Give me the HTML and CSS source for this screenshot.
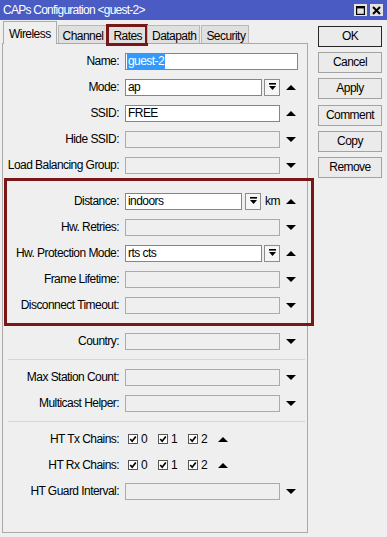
FILE: index.html
```html
<!DOCTYPE html>
<html>
<head>
<meta charset="utf-8">
<title>CAPs Configuration</title>
<link rel="stylesheet" href="styles.css">
</head>
<body>
<div class="titlebar">
  <span class="title">CAPs Configuration &lt;guest-2&gt;</span>
  <div class="wbtns">
    <span class="wbtn"><svg width="9" height="9" viewBox="0 0 9 9"><rect x="0.6" y="0.6" width="7.8" height="7.8" fill="none" stroke="#000" stroke-width="1.2"/><rect x="0" y="0" width="9" height="2.4" fill="#000"/></svg></span>
    <span class="wbtn"><svg width="9" height="9" viewBox="0 0 9 9"><path d="M1 1 L8 8 M8 1 L1 8" stroke="#000" stroke-width="2"/></svg></span>
  </div>
</div>
<div class="main">
  <div class="left">
    <div class="tabs">
      <div class="tab active">Wireless</div>
      <div class="tab">Channel</div>
      <div class="tab mark">Rates</div>
      <div class="tab">Datapath</div>
      <div class="tab">Security</div>
    </div>
    <div class="panel">
      <div class="group">
        <div class="row"><span class="lbl">Name:</span><div class="field"><div class="input"><span class="sel">guest-2</span></div></div></div>
        <div class="row"><span class="lbl">Mode:</span><div class="field"><div class="input">ap</div><div class="dd"><svg width="7" height="8" viewBox="0 0 7 8"><rect x="0" y="0" width="7" height="1.6" fill="#000"/><polygon points="0,3 7,3 3.5,7" fill="#000"/></svg></div><div class="slot"><svg class="arr" width="10" height="5" viewBox="0 0 10 5"><polygon points="0,5 5,0 10,5" fill="#000"/></svg></div></div></div>
        <div class="row"><span class="lbl">SSID:</span><div class="field"><div class="input">FREE</div><div class="slot"><svg class="arr" width="10" height="5" viewBox="0 0 10 5"><polygon points="0,5 5,0 10,5" fill="#000"/></svg></div></div></div>
        <div class="row"><span class="lbl">Hide SSID:</span><div class="field"><div class="input off"></div><div class="slot"><svg class="arr" width="10" height="5" viewBox="0 0 10 5"><polygon points="0,0 10,0 5,5" fill="#000"/></svg></div></div></div>
        <div class="row"><span class="lbl">Load Balancing Group:</span><div class="field"><div class="input off"></div><div class="slot"><svg class="arr" width="10" height="5" viewBox="0 0 10 5"><polygon points="0,0 10,0 5,5" fill="#000"/></svg></div></div></div>
      </div>
      <div class="gap"></div>
      <div class="group hl">
        <div class="row"><span class="lbl">Distance:</span><div class="field"><div class="input">indoors</div><div class="dd dd-wide"><svg width="7" height="8" viewBox="0 0 7 8"><rect x="0" y="0" width="7" height="1.6" fill="#000"/><polygon points="0,3 7,3 3.5,7" fill="#000"/></svg></div><span class="unit">km</span><div class="slot"><svg class="arr" width="10" height="5" viewBox="0 0 10 5"><polygon points="0,5 5,0 10,5" fill="#000"/></svg></div></div></div>
        <div class="row"><span class="lbl">Hw. Retries:</span><div class="field"><div class="input off"></div><div class="slot"><svg class="arr" width="10" height="5" viewBox="0 0 10 5"><polygon points="0,0 10,0 5,5" fill="#000"/></svg></div></div></div>
        <div class="row"><span class="lbl">Hw. Protection Mode:</span><div class="field"><div class="input">rts cts</div><div class="dd"><svg width="7" height="8" viewBox="0 0 7 8"><rect x="0" y="0" width="7" height="1.6" fill="#000"/><polygon points="0,3 7,3 3.5,7" fill="#000"/></svg></div><div class="slot"><svg class="arr" width="10" height="5" viewBox="0 0 10 5"><polygon points="0,5 5,0 10,5" fill="#000"/></svg></div></div></div>
        <div class="row"><span class="lbl">Frame Lifetime:</span><div class="field"><div class="input off"></div><div class="slot"><svg class="arr" width="10" height="5" viewBox="0 0 10 5"><polygon points="0,0 10,0 5,5" fill="#000"/></svg></div></div></div>
        <div class="row"><span class="lbl">Disconnect Timeout:</span><div class="field"><div class="input off"></div><div class="slot"><svg class="arr" width="10" height="5" viewBox="0 0 10 5"><polygon points="0,0 10,0 5,5" fill="#000"/></svg></div></div></div>
      </div>
      <div class="gap"></div>
      <div class="group">
        <div class="row"><span class="lbl">Country:</span><div class="field"><div class="input off"></div><div class="slot"><svg class="arr" width="10" height="5" viewBox="0 0 10 5"><polygon points="0,0 10,0 5,5" fill="#000"/></svg></div></div></div>
      </div>
      <div class="sep"></div>
      <div class="group">
        <div class="row"><span class="lbl">Max Station Count:</span><div class="field"><div class="input off"></div><div class="slot"><svg class="arr" width="10" height="5" viewBox="0 0 10 5"><polygon points="0,0 10,0 5,5" fill="#000"/></svg></div></div></div>
        <div class="row"><span class="lbl">Multicast Helper:</span><div class="field"><div class="input off"></div><div class="slot"><svg class="arr" width="10" height="5" viewBox="0 0 10 5"><polygon points="0,0 10,0 5,5" fill="#000"/></svg></div></div></div>
      </div>
      <div class="sep"></div>
      <div class="group">
        <div class="row"><span class="lbl">HT Tx Chains:</span><div class="field checks">
          <span class="chk"><svg width="10" height="10" viewBox="0 0 10 10"><rect x="0.5" y="0.5" width="9" height="9" fill="#fff" stroke="#555"/><path d="M2.2 5 L4.2 7.2 L7.8 2.6" fill="none" stroke="#000" stroke-width="1.7"/></svg>0</span>
          <span class="chk"><svg width="10" height="10" viewBox="0 0 10 10"><rect x="0.5" y="0.5" width="9" height="9" fill="#fff" stroke="#555"/><path d="M2.2 5 L4.2 7.2 L7.8 2.6" fill="none" stroke="#000" stroke-width="1.7"/></svg>1</span>
          <span class="chk"><svg width="10" height="10" viewBox="0 0 10 10"><rect x="0.5" y="0.5" width="9" height="9" fill="#fff" stroke="#555"/><path d="M2.2 5 L4.2 7.2 L7.8 2.6" fill="none" stroke="#000" stroke-width="1.7"/></svg>2</span>
          <svg class="arr" width="10" height="5" viewBox="0 0 10 5"><polygon points="0,5 5,0 10,5" fill="#000"/></svg>
        </div></div>
        <div class="row"><span class="lbl">HT Rx Chains:</span><div class="field checks">
          <span class="chk"><svg width="10" height="10" viewBox="0 0 10 10"><rect x="0.5" y="0.5" width="9" height="9" fill="#fff" stroke="#555"/><path d="M2.2 5 L4.2 7.2 L7.8 2.6" fill="none" stroke="#000" stroke-width="1.7"/></svg>0</span>
          <span class="chk"><svg width="10" height="10" viewBox="0 0 10 10"><rect x="0.5" y="0.5" width="9" height="9" fill="#fff" stroke="#555"/><path d="M2.2 5 L4.2 7.2 L7.8 2.6" fill="none" stroke="#000" stroke-width="1.7"/></svg>1</span>
          <span class="chk"><svg width="10" height="10" viewBox="0 0 10 10"><rect x="0.5" y="0.5" width="9" height="9" fill="#fff" stroke="#555"/><path d="M2.2 5 L4.2 7.2 L7.8 2.6" fill="none" stroke="#000" stroke-width="1.7"/></svg>2</span>
          <svg class="arr" width="10" height="5" viewBox="0 0 10 5"><polygon points="0,5 5,0 10,5" fill="#000"/></svg>
        </div></div>
        <div class="row"><span class="lbl">HT Guard Interval:</span><div class="field"><div class="input off"></div><div class="slot"><svg class="arr" width="10" height="5" viewBox="0 0 10 5"><polygon points="0,0 10,0 5,5" fill="#000"/></svg></div></div></div>
      </div>
    </div>
  </div>
  <div class="buttons">
    <div class="btn default">OK</div>
    <div class="btn">Cancel</div>
    <div class="btn">Apply</div>
    <div class="btn spaced">Comment</div>
    <div class="btn">Copy</div>
    <div class="btn">Remove</div>
  </div>
</div>
</body>
</html>
```

FILE: styles.css
```css
* { box-sizing: border-box; }
html, body { margin: 0; padding: 0; }
body {
  width: 387px;
  height: 537px;
  overflow: hidden;
  background: #efefef;
  font-family: "Liberation Sans", Arial, sans-serif;
  font-size: 12px;
  letter-spacing: -0.55px;
  color: #000;
}
.titlebar {
  height: 20px;
  background: #4a5bc4;
  color: #fff;
  display: flex;
  align-items: center;
  justify-content: space-between;
  padding: 0 4px 0 3px;
}
.title { letter-spacing: -0.75px; }
.wbtns { display: flex; gap: 3px; }
.wbtn {
  width: 13px;
  height: 12px;
  background: #e2e2e2;
  display: flex;
  align-items: center;
  justify-content: center;
}
.main { display: flex; }
.left { width: 310px; padding-left: 2px; }
.tabs {
  display: flex;
  align-items: flex-end;
  height: 23px;
  margin-left: 1px;
  position: relative;
  z-index: 2;
}
.tab {
  height: 18px;
  line-height: 16px;
  padding: 2px 3px 0 4px;
  border: 1px solid #b8b8b8;
  border-bottom: none;
  background: #e0e0e0;
  margin-right: 1px;
  white-space: nowrap;
  position: relative;
}
.tab.active {
  height: 23px;
  margin-bottom: -1px;
  padding: 4px 5px 0;
  background: #efefef;
  border-color: #acacac;
}
.tab.mark::after {
  content: "";
  position: absolute;
  left: -3px;
  right: -3px;
  top: -2px;
  bottom: -3px;
  border: 3px solid #7a1518;
}
.panel {
  width: 306px;
  height: 490px;
  border: 1px solid #a9a9a9;
  padding-top: 4px;
}
.group { position: relative; }
.gap { height: 10px; }
.sep {
  height: 1px;
  background: #d6d6d6;
  margin: 5px 2px 4px 5px;
}
.row {
  display: grid;
  grid-template-columns: 116px 173px;
  column-gap: 6px;
  height: 26px;
  align-items: center;
}
.lbl { text-align: right; white-space: nowrap; }
.field {
  display: flex;
  align-items: center;
  height: 17px;
}
.input {
  flex: 1;
  height: 17px;
  border: 1px solid #858585;
  background: #fff;
  padding-left: 2px;
  line-height: 15px;
  white-space: nowrap;
  overflow: hidden;
}
.input.off {
  background: #efefef;
  border-color: #ababab;
}
.sel {
  display: inline-block;
  height: 15px;
  margin-left: -1px;
  padding: 0 1px;
  background: #3399ff;
  color: #fff;
}
.dd {
  width: 16px;
  height: 17px;
  margin-left: 2px;
  border: 1px solid #8c8c8c;
  background: #f6f6f6;
  display: flex;
  align-items: center;
  justify-content: center;
}
.dd-wide { margin-left: 3px; }
.unit { margin-left: 4px; width: 15px; }
.slot {
  width: 18px;
  display: flex;
  justify-content: flex-end;
  padding-right: 2px;
}
.arr { display: block; }
.checks { padding-left: 3px; }
.chk {
  width: 30px;
  display: flex;
  align-items: center;
  gap: 3px;
}
.chk svg { display: block; }
.group.hl::after {
  content: "";
  position: absolute;
  left: 1px;
  right: -7px;
  top: -10px;
  bottom: -8px;
  border: 3px solid #7a1518;
  pointer-events: none;
}
.buttons {
  width: 64px;
  margin-left: 8px;
  padding-top: 6px;
}
.btn {
  height: 21px;
  margin-bottom: 5px;
  border: 1px solid #a3a3a3;
  background: #ebebeb;
  text-align: center;
  line-height: 19px;
}
.btn.default { border-color: #262626; }
.btn.spaced { margin-top: 6px; }
```
